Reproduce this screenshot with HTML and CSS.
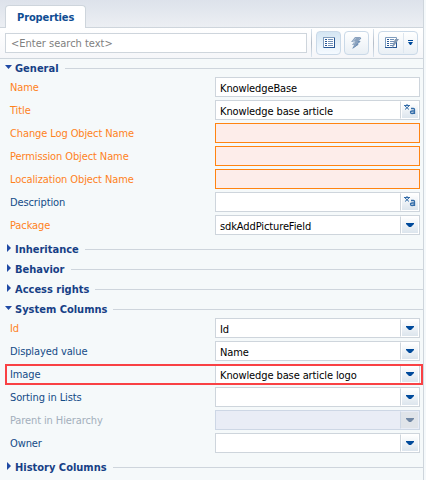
FILE: index.html
```
<!DOCTYPE html>
<html lang="en">
<head>
<meta charset="utf-8">
<title>Properties</title>
<link rel="stylesheet" href="styles.css">
</head>
<body>
<svg class="defs" width="0" height="0" aria-hidden="true">
  <symbol id="caret" viewBox="0 0 8 4"><path d="M0 0h8v1L5 4H3L0 1z"/></symbol>
  <symbol id="translate" viewBox="0 0 12 12"><path d="M0 1.500h6M3 0v1.500M1 2l4 3.500M5 2L1 5.500" stroke-width="1"/><path d="M7 4.500h2.500q1 0 1 1V10M10.500 7H8q-1.500 0-1.500 1.250T8 9.500q1.500 0 2.500-1" stroke-width="1.300"/></symbol>
</svg>
<main class="panel">
  <header class="tabs"><div class="tab">Properties</div></header>
  <div class="toolbar">
    <div class="search">&lt;Enter search text&gt;</div>
    <i class="separator"></i>
    <div class="tool active"><svg width="12" height="11" viewBox="0 0 12 11" shape-rendering="crispEdges"><path fill="#fff" stroke="#7f9cbd" d="M.5.5h11v10H.5z"/><path stroke="#285795" d="M11.500 1v10M1 10.500h11"/><path stroke="#285795" d="M2 2.500h2M2 4.500h2M2 6.500h2M2 8.500h2"/><path stroke="#7190b7" d="M5 2.500h5M5 4.500h5M5 6.500h5M5 8.500h5"/></svg></div>
    <div class="tool bolt"><svg width="11" height="12" viewBox="0 0 11 12"><path fill="#8ba2be" d="M4 0h6L7 4h3L6 7h2L1 12l2-4H1l2-3H0z"/><path fill="none" stroke="#6f8fb5" d="M10 1L7 4.500h2L5.500 7.500h1.500L2 11"/><path fill="none" stroke="#c1d0e1" stroke-width=".7" d="M5 1L2 4.500h2L2.500 7.500"/></svg></div>
    <i class="separator"></i>
    <div class="tool split"><svg width="14" height="12" viewBox="0 0 14 12"><path fill="#fff" stroke="#7f9cbd" d="M.5.5h11v10H.5z"/><path stroke="#285795" d="M11.500 5v6M0 10.500h12M2 2.500h2M2 4.500h2M2 6.500h2M2 8.500h2"/><path stroke="#7190b7" d="M5 2.500h4M5 4.500h4M5 6.500h4M5 8.500h3"/><path fill="#8298b3" d="M10 2h4l-5 7-2 2 1-4z"/></svg><span class="drop"><svg width="5" height="5" viewBox="0 0 5 5"><path fill="#004a9b" d="M0 0h5v1H0zM0 2h5L3 5H2z"/></svg></span></div>
  </div>
  <div class="sections">
    <section class="open">
      <h2><i class="arrow"></i><span>General</span></h2>
      <div class="row changed"><label>Name</label><div class="field"><span>KnowledgeBase</span></div></div>
      <div class="row changed"><label>Title</label><div class="field"><span>Knowledge base article</span><b><svg class="translate"><use href="#translate"/></svg></b></div></div>
      <div class="row changed required"><label>Change Log Object Name</label><div class="field"></div></div>
      <div class="row changed required"><label>Permission Object Name</label><div class="field"></div></div>
      <div class="row changed required"><label>Localization Object Name</label><div class="field"></div></div>
      <div class="row"><label>Description</label><div class="field"><span></span><b><svg class="translate"><use href="#translate"/></svg></b></div></div>
      <div class="row changed"><label>Package</label><div class="field"><span>sdkAddPictureField</span><b><svg class="caret"><use href="#caret"/></svg></b></div></div>
    </section>
    <section><h2><i class="arrow"></i><span>Inheritance</span></h2></section>
    <section><h2><i class="arrow"></i><span>Behavior</span></h2></section>
    <section><h2><i class="arrow"></i><span>Access rights</span></h2></section>
    <section class="open">
      <h2><i class="arrow"></i><span>System Columns</span></h2>
      <div class="row changed"><label>Id</label><div class="field"><span>Id</span><b><svg class="caret"><use href="#caret"/></svg></b></div></div>
      <div class="row"><label>Displayed value</label><div class="field"><span>Name</span><b><svg class="caret"><use href="#caret"/></svg></b></div></div>
      <div class="row highlighted"><label>Image</label><div class="field"><span>Knowledge base article logo</span><b><svg class="caret"><use href="#caret"/></svg></b></div></div>
      <div class="row"><label>Sorting in Lists</label><div class="field"><span></span><b><svg class="caret"><use href="#caret"/></svg></b></div></div>
      <div class="row disabled"><label>Parent in Hierarchy</label><div class="field"><span></span><b><svg class="caret"><use href="#caret"/></svg></b></div></div>
      <div class="row"><label>Owner</label><div class="field"><span></span><b><svg class="caret"><use href="#caret"/></svg></b></div></div>
    </section>
    <section><h2><i class="arrow"></i><span>History Columns</span></h2></section>
  </div>
</main>
</body>
</html>
```
FILE: styles.css
```
*, *::before, *::after { box-sizing: border-box; }
body { margin: 0; height: 480px; overflow: hidden; background: #f5f9fb; font: 11px/18px "DejaVu Sans Condensed", "DejaVu Sans", sans-serif; letter-spacing: -.11px; color: #000; }
.defs { position: absolute; }
.panel { width: 424px; height: 480px; border-right: 1px solid #ced5dc; background: #f5f9fa; }
.tabs { height: 28px; padding: 5px 0 0 5px; border-bottom: 1px solid #ced5dc; background: linear-gradient(#dde2eb, #eceff3); }
.tab { width: 81px; height: 23px; padding-left: 11px; border: 1px solid #ced5dc; border-bottom: 0; border-radius: 4px 4px 0 0; background: #fff; color: #0f4d93; font-weight: bold; line-height: 23px; }
.toolbar { display: flex; height: 31px; padding-left: 5px; border-bottom: 1px solid #ced5dc; background: linear-gradient(#fff, #f5f6f9); }
.search { width: 302px; height: 20px; margin-top: 5px; padding-left: 5px; border: 1px solid #ced5dc; background: #fff; color: #808080; line-height: 20px; letter-spacing: 0; }
.separator { width: 1px; height: 28px; margin: 1px 0 0 4px; background: linear-gradient(#d9e4ef, #b5bdc8, #d9e4ef); }
.tool { display: flex; align-items: center; justify-content: center; width: 25px; height: 24px; margin: 3px 0 0 4px; padding-bottom: 1px; border: 1px solid #cad9e8; border-radius: 4px; background: linear-gradient(#fff, #e9eff5); }
.tool.active { background: linear-gradient(#d5e6f3, #f5faff); }
.tool.bolt { margin-left: 3px; }
.tool.split { width: 40px; justify-content: flex-start; padding-left: 6px; }
.drop { display: flex; align-items: center; justify-content: center; width: 14px; height: 20px; margin-left: 4px; border-left: 1px solid #dde6ef; }
section { padding-bottom: 2px; }
h2 { display: flex; align-items: center; height: 18px; margin: 0; padding-left: 5px; color: #173f86; font-size: 11px; line-height: 18px; letter-spacing: 0; }
h2 span { padding-top: 2px; }
h2::after { content: ""; flex: 1; height: 1px; margin: 1px 0 0 6px; background: #ced5dc; }
.arrow { width: 10px; height: 8px; flex: none; }
.arrow::before { content: ""; display: block; width: 4px; height: 8px; margin: -1px 0 0 2px; background: #1f4aa4; clip-path: polygon(0 0, 100% 50%, 0 100%); }
.open .arrow::before { width: 7px; height: 4px; margin: 1px 0 0; clip-path: polygon(0 0, 100% 0, 50% 100%); }
.row { position: relative; display: flex; height: 23px; padding-left: 10px; color: #134b87; }
.row label { width: 205px; line-height: 22px; }
.field { display: flex; width: 205px; height: 20px; border: 1px solid #ced5dc; background: #fff; color: #000; line-height: 22px; }
.field span { flex: 1; padding-left: 4px; }
.field b { display: flex; align-items: center; justify-content: center; width: 19px; border: 1px solid #fff; border-left: 1px solid #ced5dc; background: linear-gradient(#fff, #dce5ed); box-shadow: inset 1px 0 #fff; }
.changed { color: #ff821c; }
.required .field { border-color: #ff8412; background: #fdedea; }
.caret { width: 8px; height: 4px; fill: #004a9b; }
.translate { width: 12px; height: 12px; fill: none; stroke: #346da9; }
.disabled { color: #a3afbc; }
.disabled .field { border-color: #cdd7e5; background: #e9edf6; }
.disabled .field b { border-color: #e9edf6; border-left-color: #cdd7e5; background: #e0e4e9; box-shadow: none; }
.disabled .caret { fill: #7187a4; }
.highlighted::after { content: ""; position: absolute; left: 5px; top: 0; width: 418px; height: 21px; border: 2px solid #f94144; }
```
